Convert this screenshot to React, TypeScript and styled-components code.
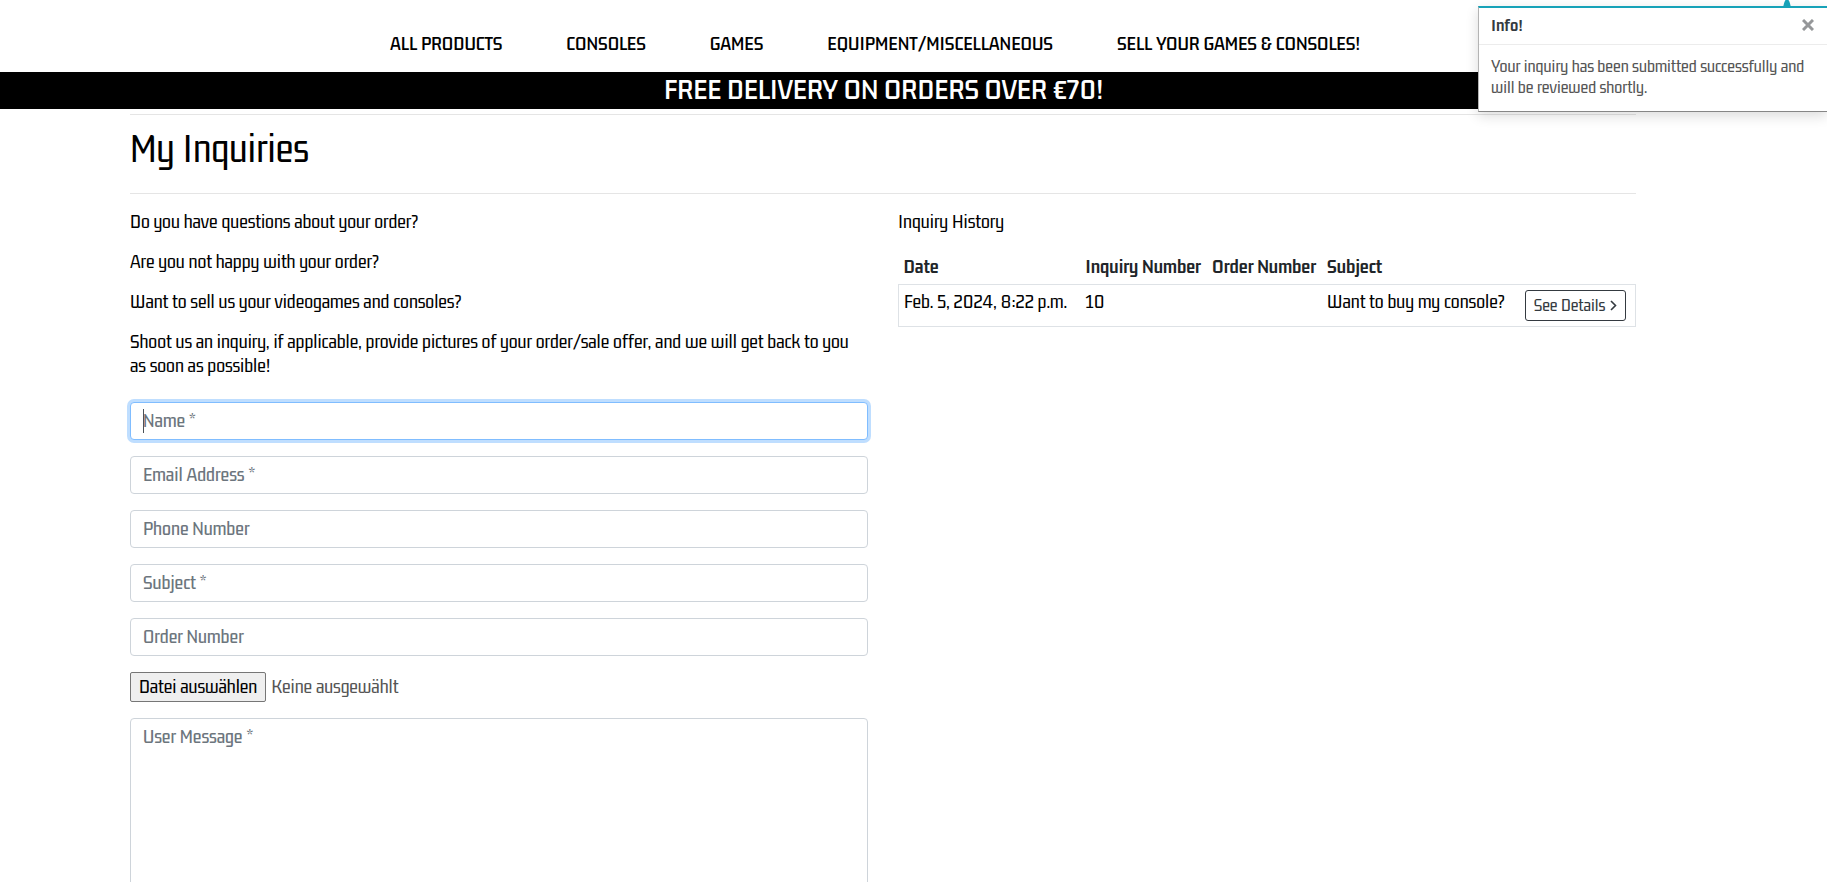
import React from "react";
import styled, { createGlobalStyle, css } from "styled-components";

const GlobalStyle = createGlobalStyle`
  *, *::before, *::after { box-sizing: border-box; }
  body {
    margin: 0;
    background: #fff;
    color: #000;
    font-family: "Gemunu Libre", "Roboto Condensed", Roboto, sans-serif;
    font-size: 20px;
    line-height: 24px;
  }
  input, textarea, button { font: inherit; }
`;

const Nav = styled.nav`
  display: flex;
  justify-content: center;
  align-items: center;
  gap: 64px;
  height: 72px;
  padding: 14px 77px 0 0;
`;

const NavLink = styled.a`
  color: #000;
  font-weight: 600;
  text-decoration: none;
  white-space: nowrap;
`;

const Banner = styled.div`
  padding: 0 60px 4px 0;
  background: #000;
  color: #fff;
  font-size: 30px;
  font-weight: 600;
  line-height: 33px;
  text-align: center;
`;

const Main = styled.main`
  margin: 0 191px 0 130px;
  padding-top: 5px;
`;

const Rule = styled.hr`
  height: 1px;
  margin: 0;
  border: 0;
  background: #e5e5e5;
`;

const Title = styled.h2`
  margin: 0;
  padding: 13px 0 25px;
  font-size: 41px;
  font-weight: 400;
  line-height: 40px;
`;

const Columns = styled.div`
  display: grid;
  grid-template-columns: 1fr 1fr;
  gap: 30px;
  padding-top: 15px;
`;

const Text = styled.p`
  margin: 0 0 16px;
`;

const Form = styled.form`
  display: flex;
  flex-direction: column;
  gap: 16px;
  padding-top: 9px;
`;

const control = css`
  display: block;
  width: 100%;
  padding: 5px 12px 7px;
  border: 1px solid #ced4da;
  border-radius: 4px;
  background: #fff;
  color: #495057;
  outline: 0;
  &::placeholder { color: #6c757d; font-weight: 500; opacity: 1; }
`;

const TextField = styled.input<{ $active?: boolean }>`
  ${control}
  height: 38px;
  ${(p) =>
    p.$active &&
    css`
      border-color: #80bdff;
      background: linear-gradient(#495057, #495057) 12px 6px / 1px 24px no-repeat #fff;
      box-shadow: 0 0 0 3px #bfdeff;
    `}
`;

const MessageField = styled.textarea`
  ${control}
  height: 254px;
  resize: none;
`;

const FileRow = styled.div`
  display: flex;
  align-items: flex-start;
  gap: 5px;
  color: #555;
  line-height: 28px;
`;

const FileLabel = styled.label`
  height: 30px;
  padding: 0 8px;
  border: 1px solid #767676;
  border-radius: 2px;
  background: #efefef;
  color: #000;
  line-height: 26px;
  cursor: pointer;
`;

const HiddenFile = styled.input`
  position: absolute;
  width: 1px;
  height: 1px;
  opacity: 0;
`;

const History = styled.table`
  width: 100%;
  border-collapse: collapse;
  tbody tr { border: 1px solid #dee2e6; }
`;

const Head = styled.th`
  padding: 5px 5px 6px;
  color: #212529;
  font-weight: 700;
  text-align: left;
  white-space: nowrap;
`;

const Cell = styled.td`
  padding: 4px 5px 6px;
  vertical-align: top;
  white-space: nowrap;
`;

const ActionCell = styled(Cell)`
  padding-top: 5px;
  padding-bottom: 5px;
`;

const Col = styled.col<{ $width: number }>`
  width: ${(p) => p.$width}px;
`;

const DetailsButton = styled.button`
  display: flex;
  align-items: center;
  gap: 5px;
  height: 31px;
  padding: 0 8px 2px;
  border: 1px solid #343a40;
  border-radius: 3px;
  background: #fff;
  color: #343a40;
  font-size: 18px;
  line-height: 20px;
`;

const Toast = styled.aside`
  position: absolute;
  top: 6px;
  right: 0;
  width: 349px;
  border: solid #868686;
  border-width: 2px 0 1px 1px;
  border-top-color: #17a2b8;
  border-left-color: #b4b4b4;
  background: #fff;
  box-shadow: 0 4px 12px rgba(0, 0, 0, 0.14);
  font-size: 18px;
  line-height: 21px;
`;

const ToastArrow = styled.svg`
  position: absolute;
  top: -8px;
  right: 36px;
`;

const ToastHeader = styled.header`
  display: flex;
  justify-content: space-between;
  align-items: center;
  height: 37px;
  padding: 0 13px 2px 12px;
  border-bottom: 1px solid #ececec;
  color: #343a40;
`;

const ToastTitle = styled.strong`
  font-weight: 700;
`;

const CloseButton = styled.button`
  display: flex;
  padding: 0;
  border: 0;
  background: none;
  color: #959799;
`;

const ToastBody = styled.p`
  margin: 0;
  padding: 11px 12px 13px;
  color: #555;
`;

const links = ["All Products", "Consoles", "Games", "Equipment/Miscellaneous", "Sell your games & consoles!"];

const fields = [
  { name: "name", label: "Name *", active: true },
  { name: "email", label: "Email Address *" },
  { name: "phone", label: "Phone Number" },
  { name: "subject", label: "Subject *" },
  { name: "order", label: "Order Number" },
];

const columnWidths = [182, 127, 115, 198, 116];

export default function App() {
  return (
    <>
      <GlobalStyle />
      <Nav>
        {links.map((link) => (
          <NavLink key={link} href="#">{link.toUpperCase()}</NavLink>
        ))}
      </Nav>
      <Banner>FREE DELIVERY ON ORDERS OVER €70!</Banner>
      <Main>
        <Rule />
        <Title>My Inquiries</Title>
        <Rule />
        <Columns>
          <section>
            <Text>Do you have questions about your order?</Text>
            <Text>Are you not happy with your order?</Text>
            <Text>Want to sell us your videogames and consoles?</Text>
            <Text>
              Shoot us an inquiry, if applicable, provide pictures of your order/sale offer, and we will get back to you as soon as possible!
            </Text>
            <Form>
              {fields.map((f) => (
                <TextField key={f.name} name={f.name} placeholder={f.label} aria-label={f.label} $active={f.active} />
              ))}
              <FileRow>
                <FileLabel htmlFor="picture">Datei auswählen</FileLabel>
                <HiddenFile id="picture" type="file" />
                <span>Keine ausgewählt</span>
              </FileRow>
              <MessageField name="message" placeholder="User Message *" aria-label="User Message *" />
            </Form>
          </section>
          <section>
            <Text>Inquiry History</Text>
            <History>
              <colgroup>
                {columnWidths.map((width) => (
                  <Col key={width} $width={width} />
                ))}
              </colgroup>
              <thead>
                <tr>
                  <Head>Date</Head>
                  <Head>Inquiry Number</Head>
                  <Head>Order Number</Head>
                  <Head>Subject</Head>
                  <Head aria-label="Details" />
                </tr>
              </thead>
              <tbody>
                <tr>
                  <Cell>Feb. 5, 2024, 8:22 p.m.</Cell>
                  <Cell>10</Cell>
                  <Cell />
                  <Cell>Want to buy my console?</Cell>
                  <ActionCell>
                    <DetailsButton type="button">
                      See Details
                      <svg width="7" height="12" viewBox="0 0 7 12" fill="none" stroke="currentColor" strokeWidth="1.6" aria-hidden="true">
                        <path d="M1 2 5.5 6.5 1 11" />
                      </svg>
                    </DetailsButton>
                  </ActionCell>
                </tr>
              </tbody>
            </History>
          </section>
        </Columns>
      </Main>
      <Toast role="status">
        <ToastArrow width="8" height="8" viewBox="0 0 8 8" aria-hidden="true">
          <path d="M2.5 0h3Q7 2 8 8H0Q1 2 2.5 0Z" fill="#17a2b8" />
        </ToastArrow>
        <ToastHeader>
          <ToastTitle>Info!</ToastTitle>
          <CloseButton type="button" aria-label="Close">
            <svg width="12" height="12" viewBox="0 0 12 12" fill="none" stroke="currentColor" strokeWidth="3" aria-hidden="true">
              <path d="M1 1 11 11M11 1 1 11" />
            </svg>
          </CloseButton>
        </ToastHeader>
        <ToastBody>Your inquiry has been submitted successfully and will be reviewed shortly.</ToastBody>
      </Toast>
    </>
  );
}
